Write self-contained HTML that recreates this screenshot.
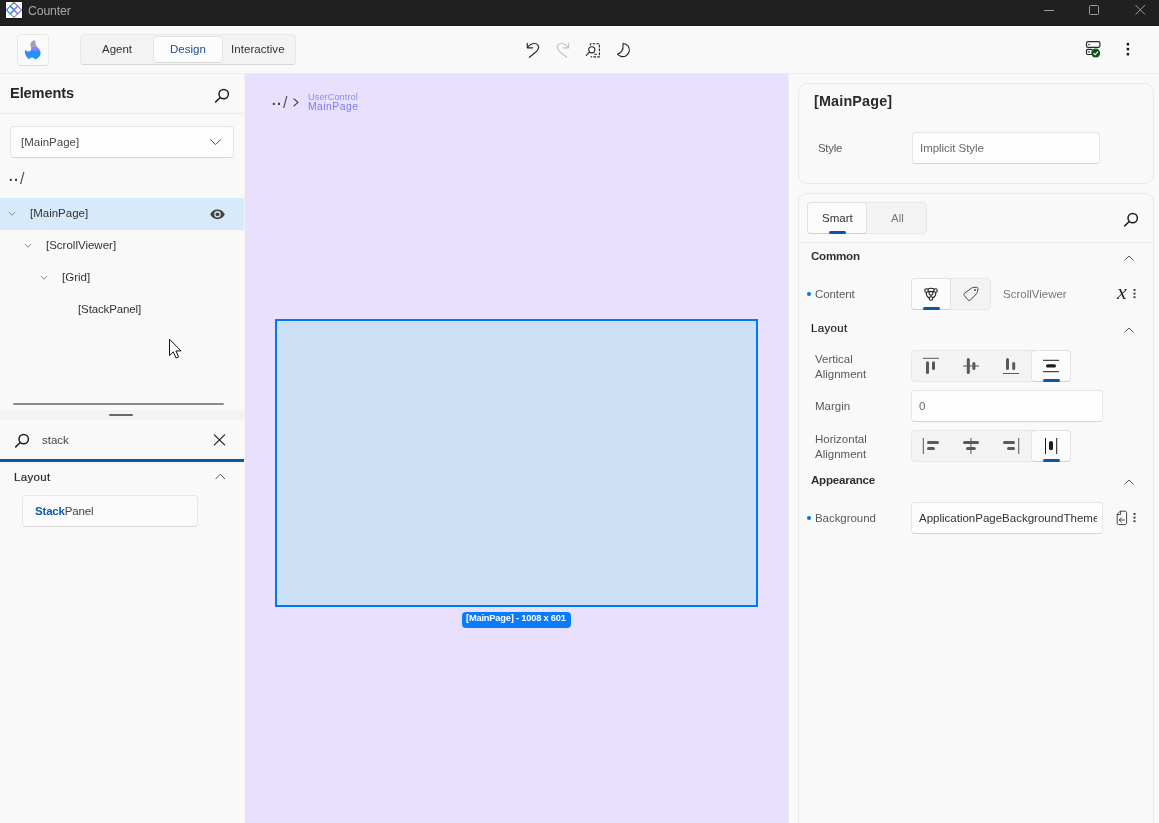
<!DOCTYPE html>
<html lang="en">
<head>
<meta charset="utf-8">
<title>Counter</title>
<style>
*{box-sizing:border-box;margin:0;padding:0}
html,body{width:1159px;height:823px;overflow:hidden;background:#f9f9f9}
body{position:relative;font-family:"Liberation Sans",sans-serif;font-size:11.5px;color:#5a5a5a;line-height:1}
.abs{position:absolute}
.t{position:absolute;white-space:nowrap;line-height:14px;height:14px;will-change:transform}
.box{position:absolute;border:1px solid #e6e6e6;border-radius:4px}
svg{position:absolute;overflow:visible}
/* title bar */
#titlebar{left:0;top:0;width:1159px;height:26px;background:#202020;border-bottom:1px solid #131313}
#toolbar{left:0;top:26px;width:1159px;height:48px;background:#f9f9f9;border-top:1px solid #fff;border-bottom:1px solid #ededed}
#canvas{left:245px;top:74px;width:543px;height:749px;background:#e8e0fd;border-right:1px solid #efecf8;box-sizing:content-box}
#leftline{left:244px;top:74px;width:1px;height:749px;background:#f1f1f1}

.sec{font-size:11.6px;font-weight:700;color:#303030;letter-spacing:-0.25px}
.chev{fill:none;stroke:#555;stroke-width:1;stroke-linecap:round;stroke-linejoin:round}
.kebab{fill:#444}
.dot{width:4px;height:4px;border-radius:2px;background:#0a72e8}
</style>
</head>
<body>
<!-- TITLE BAR -->
<div class="abs" id="titlebar"></div>
<svg style="left:5px;top:1px" width="18" height="18" viewBox="-1 -1 18 18">
  <rect x="-0.6" y="-0.6" width="17.2" height="17.2" fill="#121212"/>
  <rect width="16" height="16" fill="#fff"/>
  <g fill="none" stroke-width="1.1" stroke-linejoin="round">
  <path d="M8 0.4 L11.8 4.2 L8 8 L4.2 4.2 Z" stroke="#7b7b7b"/>
  <path d="M8 7.8 L11.8 11.6 L8 15.4 L4.2 11.6 Z" stroke="#8a8a8a"/>
  <path d="M4.3 4.1 L8.3 8 L4.3 11.9 L0.5 8 Z" stroke="#0f86ff"/>
  <path d="M11.7 4.1 L15.5 8 L11.7 11.9 L7.7 8 Z" stroke="#8d6bff"/>
  </g>
</svg>
<div class="t" style="left:28px;top:4px;font-size:12.3px;color:#a6a6a6;letter-spacing:-0.15px">Counter</div>
<svg style="left:1043px;top:4px" width="104" height="12" viewBox="0 0 104 12" fill="none" stroke="#9a9a9a" stroke-width="1">
  <path d="M1 6.5 H11"/>
  <rect x="46.5" y="1.5" width="9" height="9" rx="1"/>
  <path d="M92.5 1 L102 10.5 M102 1 L92.5 10.5"/>
</svg>

<!-- TOOLBAR -->
<div class="abs" id="toolbar"></div>
<div class="box" style="left:17px;top:34px;width:32px;height:31.5px;background:#fafafa;border-color:#e8e8e8;border-bottom-color:#dcdcdc"></div>
<svg style="left:24px;top:39px" width="18" height="22" viewBox="0 0 18 22">
  <defs><linearGradient id="fl" x1="0" y1="1" x2="0" y2="20.6" gradientUnits="userSpaceOnUse">
    <stop offset="0" stop-color="#a5a5a5"/><stop offset="0.33" stop-color="#a49fb4"/><stop offset="0.37" stop-color="#9b7bff"/><stop offset="0.5" stop-color="#7d88f6"/><stop offset="0.6" stop-color="#2a8ef6"/><stop offset="1" stop-color="#2196f3"/>
  </linearGradient></defs>
  <path d="M10.4 1 C8.4 1.6 6.4 3.2 6.4 5.6 C6.4 7.2 7.2 8.2 7.2 9.4 C7.2 11.2 5.9 12.4 4.2 12.4 C2.8 12.4 1.8 11.6 1.2 10.6 C0.8 11.8 0.8 13.4 1.2 14.8 C1.8 17.2 3.4 19.2 5.2 20.4 C5.6 19.2 6.6 18.4 8 18.4 C9.4 18.4 10.4 19.2 11 20.4 C14.2 19.6 16.6 17.2 16.6 14 C16.6 11.8 15.4 10.2 14 8.8 C12.6 7.4 11.9 6.4 11.7 4.8 C11.6 3.4 11.4 2.2 10.4 1 Z" fill="url(#fl)"/>
</svg>
<div class="box" style="left:80px;top:34px;width:216px;height:31px;background:#f3f3f3;border-color:#e7e7e7;border-bottom-color:#d6d6d6"></div>
<div class="box" style="left:153px;top:36px;width:70px;height:27px;background:#fcfcfc;border-color:#e4e4e4;border-bottom-color:#d6d6d6"></div>
<div class="t" style="left:102px;top:42px;color:#333">Agent</div>
<div class="t" style="left:170px;top:42px;color:#17508a">Design</div>
<div class="t" style="left:231px;top:42px;color:#333;letter-spacing:0.05px">Interactive</div>

<!-- toolbar icons -->
<svg style="left:0;top:0" width="700" height="70" viewBox="0 0 700 70" fill="none" stroke="#2a2a2a" stroke-width="1.15" stroke-linecap="round" stroke-linejoin="round">
  <path d="M527.3 43.4 V47.8 H532.6"/>
  <path d="M527.7 47.4 C529.4 45 532 43.4 534.8 43.5 C537.4 43.6 538.8 45.6 538.6 47.6 C538.4 49.6 537.2 50.8 535.6 52.2 L529.4 57.3"/>
  <g stroke="#c2c2c2" transform="translate(1095.9,0) scale(-1,1)">
    <path d="M527.3 43.4 V47.8 H532.6"/>
    <path d="M527.7 47.4 C529.4 45 532 43.4 534.8 43.5 C537.4 43.6 538.8 45.6 538.6 47.6 C538.4 49.6 537.2 50.8 535.6 52.2 L529.4 57.3"/>
  </g>
  <path d="M590.4 45.4 V43.7 H599.4 V56.9 H590.6" stroke-dasharray="2.7 1.2" stroke-linecap="butt"/>
  <path d="M594.4 54.3 H596.8" stroke-linecap="butt"/>
  <circle cx="591.8" cy="49.8" r="3.1" fill="#f9f9f9"/>
  <path d="M589.5 52.1 L586.3 55.3"/>
  <path d="M623.2 43.5 C627.4 43.9 630 47.4 629.3 51.2 C628.5 55.2 624.6 57.5 621 56.4 C619.4 55.9 618 55 617.5 54 C620.9 53.3 623.7 50 623 45 C622.9 44.3 622.9 43.7 623.2 43.5 Z"/>
</svg>
<!-- server icon -->
<svg style="left:1085px;top:40px" width="17" height="18" viewBox="0 0 17 18" fill="none">
  <rect x="1.5" y="1.7" width="13.4" height="5.6" rx="1.6" stroke="#2a2a2a" stroke-width="1.2"/>
  <rect x="1.5" y="9.3" width="6" height="5.2" rx="1.2" stroke="#2a2a2a" stroke-width="1.2"/>
  <circle cx="4" cy="4.5" r="0.8" fill="#2a2a2a"/>
  <circle cx="4" cy="11.9" r="0.8" fill="#2a2a2a"/>
  <circle cx="10.7" cy="13.1" r="4.5" fill="#0e5519"/>
  <path d="M8.5 13.2 L10.1 14.8 L13 11.6" stroke="#fff" stroke-width="1.1"/>
</svg>
<svg style="left:1126px;top:43px" width="4" height="13" viewBox="0 0 4 13" fill="#111">
  <rect x="0.7" y="0" width="2.4" height="2.4"/><rect x="0.7" y="4.9" width="2.4" height="2.4"/><rect x="0.7" y="10" width="2.4" height="2.4"/>
</svg>


<!-- LEFT PANEL -->
<div class="t" style="left:10px;top:84px;font-size:14.6px;font-weight:700;color:#262626;line-height:18px;height:18px;letter-spacing:-0.1px">Elements</div>
<svg class="mag" style="left:214px;top:88px" width="16" height="16" viewBox="0 0 16 16" fill="none" stroke="#1f1f1f" stroke-width="1.5" stroke-linecap="round">
  <circle cx="9.7" cy="6.1" r="4.7"/><path d="M6.3 9.5 L1.7 13.9"/>
</svg>
<div class="abs" style="left:0;top:113px;width:244px;height:1px;background:#ebebeb"></div>
<div class="box" style="left:10px;top:126px;width:224px;height:32px;background:#fdfdfd;border-color:#e6e6e6;border-bottom-color:#d4d4d4"></div>
<div class="t" style="left:20.5px;top:134.5px;color:#4a4a4a">[MainPage]</div>
<svg style="left:209px;top:138px" width="13" height="8" viewBox="0 0 13 8" fill="none" stroke="#4a4a4a" stroke-width="1" stroke-linecap="round" stroke-linejoin="round"><path d="M1.6 1.6 L6.6 6.6 L11.6 1.6"/></svg>
<div class="t" style="left:8px;top:164px;font-size:20px;color:#3a3a3a;line-height:20px;height:20px;letter-spacing:-0.4px">..</div><div class="t" style="left:20px;top:171px;font-size:16px;color:#555;line-height:16px;height:16px">/</div>

<div class="abs" style="left:0;top:198px;width:244px;height:32px;background:#d7eafc"></div>
<svg style="left:8px;top:211px" width="8" height="6" viewBox="0 0 8 6" fill="none" stroke="#8a8a8a" stroke-width="1" stroke-linecap="round" stroke-linejoin="round"><path d="M1.1 1.2 L4 4.3 L6.9 1.2"/></svg>
<svg style="left:24px;top:243px" width="8" height="6" viewBox="0 0 8 6" fill="none" stroke="#8a8a8a" stroke-width="1" stroke-linecap="round" stroke-linejoin="round"><path d="M1.1 1.2 L4 4.3 L6.9 1.2"/></svg>
<svg style="left:40px;top:275px" width="8" height="6" viewBox="0 0 8 6" fill="none" stroke="#8a8a8a" stroke-width="1" stroke-linecap="round" stroke-linejoin="round"><path d="M1.1 1.2 L4 4.3 L6.9 1.2"/></svg>
<div class="t" style="left:30px;top:206px;color:#333">[MainPage]</div>
<div class="t" style="left:46px;top:238px;color:#333">[ScrollViewer]</div>
<div class="t" style="left:62px;top:270px;color:#333">[Grid]</div>
<div class="t" style="left:78px;top:302px;color:#333;letter-spacing:-0.12px">[StackPanel]</div>
<svg style="left:209.5px;top:208.5px" width="15" height="11" viewBox="0 0 15 11">
  <path d="M7.5 0.4 C4.2 0.4 1.4 2.4 0.2 5.3 C1.4 8.2 4.2 10.2 7.5 10.2 C10.8 10.2 13.6 8.2 14.8 5.3 C13.6 2.4 10.8 0.4 7.5 0.4 Z" fill="#444"/>
  <circle cx="7.5" cy="5.3" r="3.2" fill="#d7eafc"/><circle cx="7.5" cy="5.3" r="1.9" fill="#444"/>
</svg>
<!-- cursor -->
<svg style="left:168px;top:338px" width="14" height="22" viewBox="0 0 14 22">
  <path d="M1.5 1.2 L1.5 17.6 L5.3 13.9 L8 20 L10.6 18.9 L7.9 12.9 L13 12.9 Z" fill="#fff" stroke="#111" stroke-width="1" stroke-linejoin="miter"/>
</svg>
<div class="abs" style="left:13px;top:403px;width:211px;height:2px;background:#8a8a8a;border-radius:1px"></div>
<div class="abs" style="left:0;top:410px;width:244px;height:10px;background:#f3f3f3"></div>
<div class="abs" style="left:109px;top:414px;width:24px;height:2px;background:#686868;border-radius:1px"></div>
<svg style="left:13.5px;top:433px" width="16" height="16" viewBox="0 0 16 16" fill="none" stroke="#1f1f1f" stroke-width="1.5" stroke-linecap="round">
  <circle cx="9.7" cy="6.1" r="4.7"/><path d="M6.3 9.5 L1.7 13.9"/>
</svg>
<div class="t" style="left:42px;top:433px;color:#444">stack</div>
<svg style="left:213px;top:434px" width="13" height="12" viewBox="0 0 13 12" fill="none" stroke="#1f1f1f" stroke-width="1.2" stroke-linecap="round"><path d="M1.4 0.9 L11.6 10.9 M11.6 0.9 L1.4 10.9"/></svg>
<div class="abs" style="left:0;top:459px;width:244px;height:3px;background:#0a57a4"></div>
<div class="t" style="left:14px;top:470px;font-size:11.5px;color:#2a2a2a;letter-spacing:0.32px;-webkit-text-stroke:0.2px #2a2a2a">Layout</div>
<svg style="left:215px;top:473px" width="11" height="7" viewBox="0 0 11 7" fill="none" stroke="#555" stroke-width="1" stroke-linecap="round" stroke-linejoin="round"><path d="M0.8 5.8 L5.3 1.2 L9.8 5.8"/></svg>
<div class="box" style="left:22px;top:495px;width:176px;height:31.5px;background:#fbfbfb;border-color:#e6e6e6;border-bottom-color:#d8d8d8"></div>
<div class="t" style="left:35px;top:504px;color:#444;letter-spacing:-0.18px"><b style="color:#0d5bb0">Stack</b>Panel</div>

<!-- CANVAS -->
<div class="abs" id="canvas"></div>
<div class="abs" id="leftline"></div>
<div class="t" style="left:271px;top:88px;font-size:20px;color:#3a3a3a;line-height:20px;height:20px;letter-spacing:-0.4px">..</div><div class="t" style="left:283px;top:95px;font-size:16px;color:#555;line-height:16px;height:16px">/</div>
<svg style="left:293px;top:98px" width="6" height="9" viewBox="0 0 6 9" fill="none" stroke="#333" stroke-width="1.1" stroke-linecap="round" stroke-linejoin="round"><path d="M1 0.8 L5 4.3 L1 7.8"/></svg>
<div class="t" style="left:308px;top:92px;font-size:9.2px;color:#8b8cf3;line-height:11px;height:11px;letter-spacing:0.08px">UserControl</div>
<div class="t" style="left:308px;top:99.8px;font-size:10.4px;color:#7d7cf0;line-height:13px;height:13px;letter-spacing:0.45px">MainPage</div>
<div class="abs" style="left:275px;top:319px;width:483px;height:288px;border:2px solid #0078fa;background:#cde1f6"></div>
<div class="abs" style="left:462px;top:612px;width:109px;height:16px;border-radius:4px;background:#0a7cfa"></div>
<div class="t" style="left:465.5px;top:611.5px;font-size:9.3px;font-weight:700;color:#fff;line-height:12px;height:12px;letter-spacing:-0.2px">[MainPage] - 1008 x 601</div>


<!-- RIGHT PANEL -->
<div class="abs" style="left:798px;top:83px;width:356px;height:101px;border:1px solid #eaeaea;border-radius:9px;background:#f9f9f9"></div>
<div class="abs" style="left:798px;top:193px;width:356px;height:650px;border:1px solid #eaeaea;border-radius:9px;background:#f9f9f9"></div>
<div class="t" style="left:814px;top:92px;font-size:14.4px;font-weight:700;color:#2a2a2a;line-height:18px;height:18px;letter-spacing:0.15px">[MainPage]</div>
<div class="t" style="left:818px;top:141px;letter-spacing:-0.3px">Style</div>
<div class="box" style="left:912px;top:132px;width:188px;height:32px;background:#fdfdfd;border-color:#e6e6e6;border-bottom-color:#d4d4d4"></div>
<div class="t" style="left:920px;top:141px;color:#6a6a6a;letter-spacing:-0.05px">Implicit Style</div>

<div class="box" style="left:807px;top:202px;width:120px;height:32px;background:#f3f3f3;border-color:#e7e7e7"></div>
<div class="box" style="left:807px;top:202px;width:60px;height:32px;background:#fcfcfc;border-color:#e2e2e2;border-bottom-color:#d0d0d0"></div>
<div class="abs" style="left:829px;top:231px;width:17px;height:3px;border-radius:1.5px;background:#0a57a4"></div>
<div class="t" style="left:822px;top:211px;color:#333">Smart</div>
<div class="t" style="left:891px;top:211px;color:#777">All</div>
<svg style="left:1123px;top:211.5px" width="16" height="16" viewBox="0 0 16 16" fill="none" stroke="#1f1f1f" stroke-width="1.5" stroke-linecap="round">
  <circle cx="9.7" cy="6.1" r="4.7"/><path d="M6.3 9.5 L1.7 13.9"/>
</svg>
<div class="abs" style="left:799px;top:242px;width:354px;height:1px;background:#ebebeb"></div>

<div class="t sec" style="left:811px;top:249px">Common</div>
<svg class="chev" style="left:1124px;top:254.7px" width="10" height="6" viewBox="0 0 10 6"><path d="M0.7 5.3 L5 1 L9.3 5.3"/></svg>
<div class="abs dot" style="left:807px;top:292px"></div>
<div class="t" style="left:815px;top:287px;letter-spacing:-0.08px">Content</div>
<div class="box" style="left:911px;top:278px;width:80px;height:32px;background:#f3f3f3;border-color:#e7e7e7"></div>
<div class="box" style="left:911px;top:278px;width:40px;height:32px;background:#fcfcfc;border-color:#e2e2e2;border-bottom-color:#d0d0d0"></div>
<div class="abs" style="left:923px;top:307px;width:17px;height:3px;border-radius:1.5px;background:#0a57a4"></div>
<div class="t" style="left:1003px;top:287px;color:#777">ScrollViewer</div>
<div class="t" style="left:1117px;top:281px;font-family:'Liberation Serif',serif;font-style:italic;font-size:22px;color:#2a2a2a;line-height:22px;height:22px">x</div>
<svg class="kebab" style="left:1132.5px;top:289px" width="3" height="10" viewBox="0 0 3 10"><rect x="0.5" y="0" width="2" height="2"/><rect x="0.5" y="3.6" width="2" height="2"/><rect x="0.5" y="7.2" width="2" height="2"/></svg>

<div class="t sec" style="left:811px;top:321px;font-weight:400;color:#222;font-size:11.5px;letter-spacing:0.32px;-webkit-text-stroke:0.2px #222">Layout</div>
<svg class="chev" style="left:1124px;top:326.7px" width="10" height="6" viewBox="0 0 10 6"><path d="M0.7 5.3 L5 1 L9.3 5.3"/></svg>
<div class="t" style="left:815px;top:352px">Vertical</div>
<div class="t" style="left:815px;top:367px">Alignment</div>
<div class="box" style="left:911px;top:350px;width:160px;height:32px;background:#f3f3f3;border-color:#e7e7e7"></div>
<div class="box" style="left:1031px;top:350px;width:40px;height:32px;background:#fcfcfc;border-color:#e2e2e2;border-bottom-color:#d0d0d0"></div>
<div class="abs" style="left:1043px;top:379px;width:17px;height:3px;border-radius:1.5px;background:#0a57a4"></div>
<div class="t" style="left:815px;top:399px">Margin</div>
<div class="box" style="left:911px;top:390px;width:192px;height:32px;background:#fdfdfd;border-color:#e6e6e6;border-bottom-color:#d4d4d4"></div>
<div class="t" style="left:919px;top:399px;color:#6a6a6a">0</div>
<div class="t" style="left:815px;top:432px">Horizontal</div>
<div class="t" style="left:815px;top:447px">Alignment</div>
<div class="box" style="left:911px;top:430px;width:160px;height:32px;background:#f3f3f3;border-color:#e7e7e7"></div>
<div class="box" style="left:1031px;top:430px;width:40px;height:32px;background:#fcfcfc;border-color:#e2e2e2;border-bottom-color:#d0d0d0"></div>
<div class="abs" style="left:1043px;top:459px;width:17px;height:3px;border-radius:1.5px;background:#0a57a4"></div>

<div class="t sec" style="left:811px;top:473px">Appearance</div>
<svg class="chev" style="left:1124px;top:478.7px" width="10" height="6" viewBox="0 0 10 6"><path d="M0.7 5.3 L5 1 L9.3 5.3"/></svg>
<div class="abs dot" style="left:807px;top:516px"></div>
<div class="t" style="left:815px;top:511px;letter-spacing:-0.05px">Background</div>
<div class="box" style="left:911px;top:502px;width:192px;height:32px;background:#fdfdfd;border-color:#e6e6e6;border-bottom-color:#d4d4d4"></div>
<div class="t" style="left:919px;top:511px;width:178px;overflow:hidden;color:#333">ApplicationPageBackgroundThemeBrush</div>
<svg style="left:1116px;top:510px" width="12" height="16" viewBox="0 0 12 16" fill="none" stroke="#3c3c3c" stroke-width="0.95" stroke-linejoin="round" stroke-linecap="round">
  <path d="M4.6 1.2 H9 C9.9 1.2 10.6 1.9 10.6 2.8 V13 C10.6 13.9 9.9 14.6 9 14.6 H2.8 C1.9 14.6 1.2 13.9 1.2 13 V4.6 Z"/>
  <path d="M4.6 1.4 V4.6 H1.4" stroke-width="0.9"/>
  <path d="M8.6 10 H3.4 M5.4 7.8 L3.2 10 L5.4 12.2"/>
</svg>
<svg class="kebab" style="left:1132.5px;top:513px" width="3" height="10" viewBox="0 0 3 10"><rect x="0.5" y="0" width="2" height="2"/><rect x="0.5" y="3.6" width="2" height="2"/><rect x="0.5" y="7.2" width="2" height="2"/></svg>


<!-- alignment + content icons -->
<svg style="left:0;top:0;pointer-events:none" width="1159" height="823" viewBox="0 0 1159 823">
 <g fill="#595959" stroke="none">
  <!-- VA top -->
  <rect x="923" y="357.8" width="16" height="1"/>
  <rect x="926" y="361.2" width="3" height="12.8" rx="1.5"/>
  <rect x="932" y="361.2" width="3" height="8.8" rx="1.5"/>
  <!-- VA center -->
  <rect x="963" y="365.5" width="16" height="1"/>
  <rect x="966.8" y="358" width="3" height="16" rx="1.5"/>
  <rect x="972.4" y="362" width="3" height="8" rx="1.5"/>
  <!-- VA bottom -->
  <rect x="1003" y="373" width="16" height="1"/>
  <rect x="1006" y="358" width="3" height="12" rx="1.5"/>
  <rect x="1012.2" y="362" width="3" height="8" rx="1.5"/>
  <!-- HA left -->
  <rect x="922.8" y="438" width="1" height="16"/>
  <rect x="927" y="441" width="12" height="3" rx="1.5"/>
  <rect x="927" y="447" width="8" height="3" rx="1.5"/>
  <!-- HA center -->
  <rect x="970.4" y="438" width="1" height="16"/>
  <rect x="963" y="441" width="16" height="3" rx="1.5"/>
  <rect x="966" y="447" width="9.8" height="3" rx="1.5"/>
  <!-- HA right -->
  <rect x="1018.2" y="438" width="1" height="16"/>
  <rect x="1003" y="441" width="12" height="3" rx="1.5"/>
  <rect x="1007" y="447" width="8" height="3" rx="1.5"/>
 </g>
 <g fill="#1c1c1c" stroke="none">
  <!-- VA stretch -->
  <rect x="1043" y="359.8" width="16" height="1"/>
  <rect x="1043" y="371.2" width="16" height="1"/>
  <rect x="1046" y="364.2" width="10" height="3.4" rx="1.7"/>
  <!-- HA stretch -->
  <rect x="1045" y="438" width="1" height="16"/>
  <rect x="1056.2" y="438" width="1" height="16"/>
  <rect x="1049" y="441" width="4" height="9.2" rx="2"/>
 </g>
 <!-- content icon 1 -->
 <g fill="none" stroke="#1c1c1c" stroke-width="1.1">
  <circle cx="926.5" cy="290.5" r="1.75"/>
  <circle cx="935.5" cy="290.5" r="1.75"/>
  <circle cx="931" cy="298.5" r="1.75"/>
  <circle cx="931" cy="293.3" r="1.9"/>
  <path d="M927.8 289.3 C929.8 288 932.2 288 934.2 289.3"/>
  <path d="M926.2 292.3 C926 295 927.6 297.2 929.4 298"/>
  <path d="M935.8 292.3 C936 295 934.4 297.2 932.6 298"/>
  <path d="M931 295.2 V296.8"/>
  <path d="M928.1 291.2 L929.4 292.2 M933.9 291.2 L932.6 292.2"/>
 </g>
 <!-- tag icon -->
 <g fill="none" stroke="#444" stroke-width="1" stroke-linejoin="round">
  <path d="M964.6 293.2 L971.4 288.2 C972 287.8 972.6 287.6 973.2 287.5 L976.4 287.2 C977.4 287.1 978 287.8 977.9 288.7 L977.5 291.6 C977.4 292.3 977.1 292.9 976.6 293.5 L970.6 299.9 C969.9 300.7 968.7 300.7 968 299.9 L964.4 295.6 C963.7 294.8 963.8 293.8 964.6 293.2 Z"/>
  <circle cx="975" cy="290.1" r="0.55" fill="#444"/>
 </g>
</svg>

</body>
</html>
